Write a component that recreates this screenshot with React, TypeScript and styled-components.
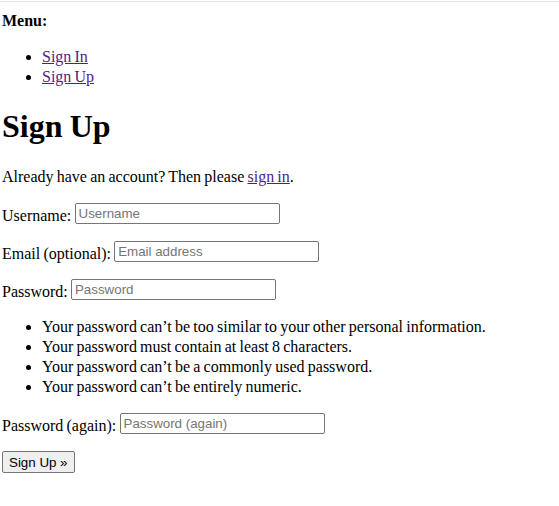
import React from "react";
import styled, { createGlobalStyle } from "styled-components";

const Global = createGlobalStyle`
  html, body { margin: 0; padding: 0; background: #fff; }
  body {
    font-family: "Liberation Serif", "Times New Roman", serif;
    font-size: 16px;
    word-spacing: -0.8px;
    color: #000;
  }
`;

const TopRule = styled.div`
  height: 1px;
  margin-top: 1px;
  background: #e6e3f7;
`;

const Page = styled.div`
  padding: 9px 2px 0;
`;

const MenuTitle = styled.strong`
  display: block;
  line-height: 20px;
`;

const List = styled.ul`
  margin: 16px 0;
  padding-left: 40px;
  line-height: 20px;
`;

const Link = styled.a`
  color: #551a8b;
  text-decoration: underline;
`;

const Title = styled.h1`
  font-size: 32px;
  font-weight: bold;
  margin: 21px 0;
  line-height: normal;
`;

const Para = styled.p`
  margin: 16px 0 15px;
  line-height: 22px;
`;

const Row = styled.p`
  margin: 15px 0 16px;
  line-height: normal;
`;

const Label = styled.label``;

const Field = styled.input`
  font-family: "Liberation Sans", Arial, sans-serif;
  font-size: 13.333px;
  word-spacing: normal;
  width: 205px;
  height: 21px;
  box-sizing: border-box;
  padding: 1px 3px;
  border: 1px solid #767676;
  border-radius: 2px;
  margin: 0;
  vertical-align: 3px;
  color: #000;
  &::placeholder { color: #757575; }
`;

const Button = styled.button`
  font-family: "Liberation Sans", Arial, sans-serif;
  font-size: 13.333px;
  word-spacing: normal;
  height: 22px;
  padding: 1px 6px;
  margin: 0;
  background: #efefef;
  border: 1px solid #767676;
  border-radius: 2px;
  color: #000;
`;

const FieldRow: React.FC<{ label: string; placeholder: string; type?: string }> = ({ label, placeholder, type = "text" }) => (
  <Row>
    <Label>{label}</Label> <Field type={type} placeholder={placeholder} />
  </Row>
);

export default function App() {
  return (
    <>
      <Global />
      <TopRule />
      <Page>
        <MenuTitle>Menu:</MenuTitle>
        <List>
          <li><Link href="#">Sign In</Link></li>
          <li><Link href="#">Sign Up</Link></li>
        </List>
        <Title>Sign Up</Title>
        <Para>
          Already have an account? Then please <Link href="#">sign in</Link>.
        </Para>
        <form>
          <FieldRow label="Username:" placeholder="Username" />
          <FieldRow label="Email (optional):" placeholder="Email address" />
          <FieldRow label="Password:" placeholder="Password" type="password" />
          <List>
            <li>Your password can’t be too similar to your other personal information.</li>
            <li>Your password must contain at least 8 characters.</li>
            <li>Your password can’t be a commonly used password.</li>
            <li>Your password can’t be entirely numeric.</li>
          </List>
          <FieldRow label="Password (again):" placeholder="Password (again)" type="password" />
          <Button type="button">Sign Up »</Button>
        </form>
      </Page>
    </>
  );
}
